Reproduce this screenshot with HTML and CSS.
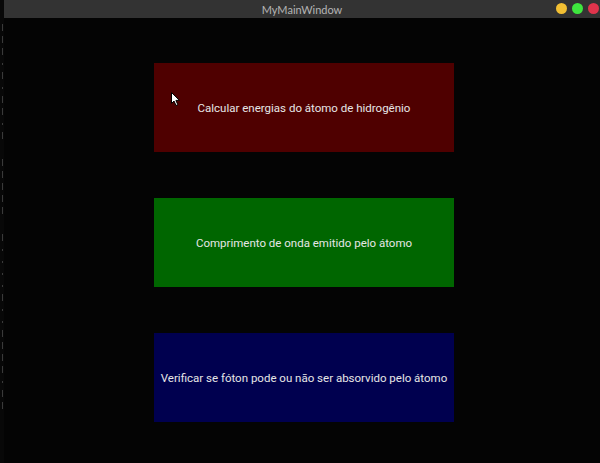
FILE: index.html
```html
<!DOCTYPE html>
<html>
<head>
<meta charset="utf-8">
<link rel="stylesheet" href="styles.css">
</head>
<body>
<div class="screen">
  <div class="behind">
    <i class="m"></i><i class="m"></i><i class="m"></i><i class="m t"></i><i class="m"></i><i class="m t"></i><i class="m"></i><i class="m"></i><i class="m t"></i><i class="m"></i><i class="gap"></i><i class="m"></i><i class="m"></i><i class="m"></i><i class="m"></i><i class="m"></i><i class="gap"></i><i class="m"></i><i class="m t"></i><i class="m t"></i><i class="m t"></i><i class="m t"></i><i class="m"></i><i class="m t"></i><i class="m t"></i><i class="m"></i><i class="m"></i><i class="m"></i><i class="m"></i><i class="m t"></i><i class="m"></i><i class="m"></i>
  </div>
  <div class="window">
    <div class="titlebar">
      <span class="title">MyMainWindow</span>
      <div class="controls">
        <span class="dot yellow"></span>
        <span class="dot green"></span>
        <span class="dot red"></span>
      </div>
    </div>
    <div class="content">
      <button class="btn btn-red">Calcular energias do átomo de hidrogênio</button>
      <button class="btn btn-green">Comprimento de onda emitido pelo átomo</button>
      <button class="btn btn-blue">Verificar se fóton pode ou não ser absorvido pelo átomo</button>
    </div>
    <svg class="cursor" width="10" height="15" viewBox="0 0 10 15">
      <path d="M0.5 0.5 L0.5 11.5 L3 9 L5 13.5 L6.8 12.7 L4.9 8.4 L8.5 8.4 Z" fill="#fff" stroke="#000" stroke-width="1"/>
    </svg>
  </div>
</div>
</body>
</html>
```

FILE: styles.css
```css
html, body {
  margin: 0;
  padding: 0;
  background: #040404;
}
.screen {
  width: 600px;
  height: 463px;
  display: flex;
  overflow: hidden;
  background: #040404;
}
.behind {
  width: 4px;
  flex: none;
  display: flex;
  flex-direction: column;
  padding-top: 24px;
  gap: 5px;
  overflow: hidden;
  background: #080808;
}
.behind .m {
  display: block;
  width: 3px;
  height: 7px;
  border-right: 1px solid #3a3a3a;
  box-sizing: border-box;
}
.behind .t {
  height: 2px;
  margin-top: 3px;
  margin-bottom: 2px;
}
.behind .gap {
  display: block;
  height: 10px;
}
.window {
  flex: 1;
  position: relative;
  display: flex;
  flex-direction: column;
  background: #040404;
}
.titlebar {
  height: 18px;
  background: #333333;
  display: flex;
  align-items: center;
  justify-content: center;
  position: relative;
}
.title {
  font-family: Lato, "Open Sans", sans-serif;
  font-size: 11px;
  color: #b4b4b4;
}
.controls {
  position: absolute;
  right: 1px;
  top: 3px;
  display: flex;
  gap: 5px;
}
.dot {
  width: 11px;
  height: 11px;
  border-radius: 50%;
  display: block;
}
.yellow { background: #f2bf33; }
.green { background: #3ee63e; }
.red { background: #e0344c; }
.content {
  display: flex;
  flex-direction: column;
  align-items: flex-start;
  padding-top: 45px;
  padding-left: 150px;
  gap: 46px;
}
.btn {
  width: 300px;
  height: 89px;
  border: none;
  margin: 0;
  padding: 1px 0 0 0;
  font-family: Roboto, "Noto Sans", sans-serif;
  font-size: 11.5px;
  color: #e6e6e6;
  display: flex;
  align-items: center;
  justify-content: center;
}
.btn-red { background: #4f0000; }
.btn-green { background: #006600; }
.btn-blue { background: #00004f; }
.cursor {
  position: absolute;
  left: 167px;
  top: 92px;
}
```
